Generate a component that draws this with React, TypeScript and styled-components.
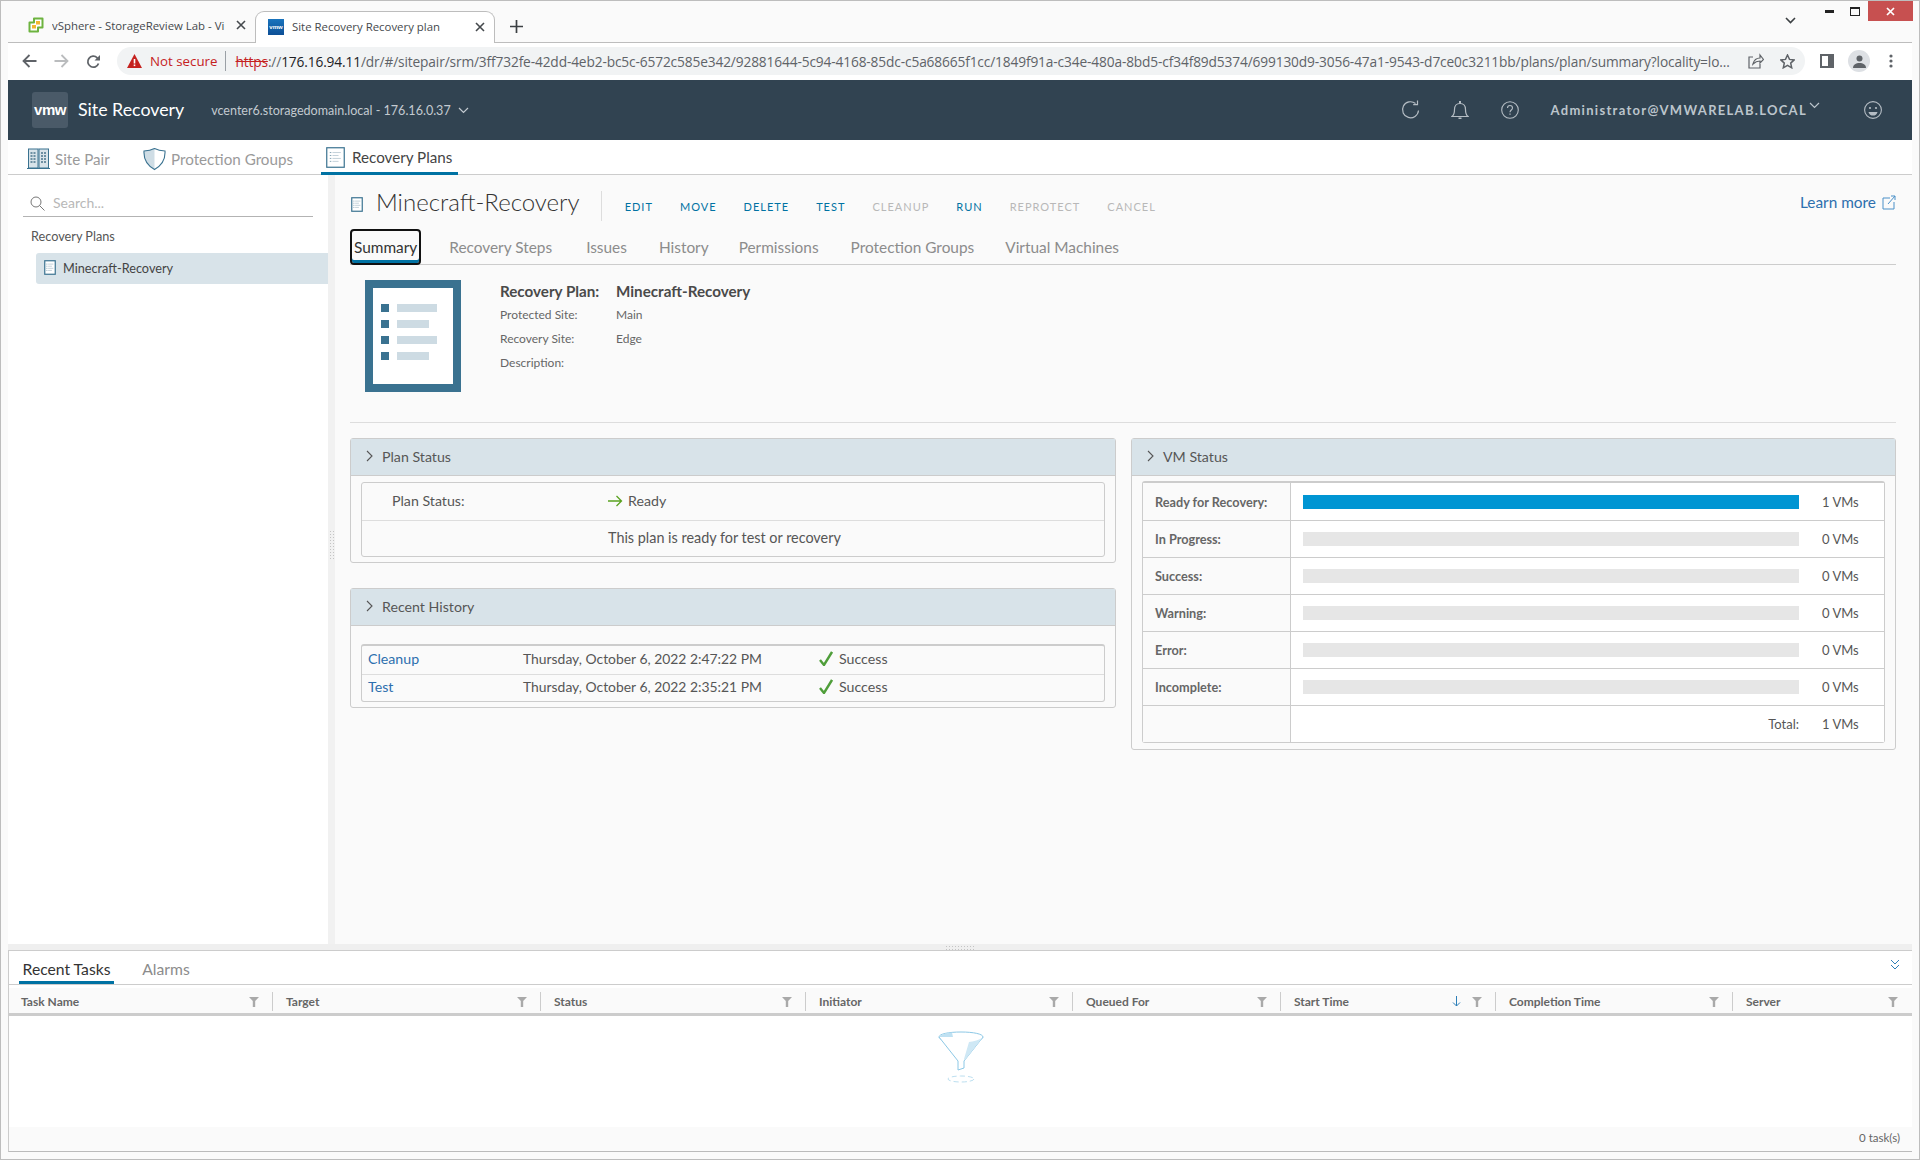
import styled, { createGlobalStyle } from "styled-components";

const GlobalStyle = createGlobalStyle`
  html, body {
    margin: 0;
    padding: 0;
    background: #fafafa;
  }
  * {
    box-sizing: border-box;
  }
`;

const APP_FONT = `Lato, "Liberation Sans", sans-serif`;
const CHROME_FONT = `"Open Sans", "Liberation Sans", sans-serif`;

const Page = styled.div`
  width: 1920px;
  height: 1160px;
  border: 1px solid #bdbdbd;
  background: #fafafa;
  display: flex;
  flex-direction: column;
  overflow: hidden;
  font-family: ${APP_FONT};
  color: #565656;
`;

/* browser chrome */
const TabStrip = styled.div`
  height: 41px;
  flex: none;
  display: flex;
  align-items: flex-end;
  padding-left: 18px;
  font-family: ${CHROME_FONT};
  font-size: 11.4px;
  color: #45494d;
`;
const BrowserTab = styled.div<{ $active?: boolean; $width: number }>`
  position: relative;
  z-index: 2;
  width: ${(p) => p.$width}px;
  height: 32px;
  margin-bottom: ${(p) => (p.$active ? "-1px" : "0")};
  display: flex;
  align-items: center;
  padding: 0 9px 2px ${(p) => (p.$active ? 12 : 9)}px;
  gap: 8px;
  background: ${(p) => (p.$active ? "#fff" : "transparent")};
  border: ${(p) => (p.$active ? "1px solid #bdbdbd" : "none")};
  border-bottom: none;
  border-radius: 9px 9px 0 0;
`;
const BrowserTabTitle = styled.span`
  flex: 1;
  overflow: hidden;
  white-space: nowrap;
`;
const VmwFavicon = styled.span`
  width: 16px;
  height: 16px;
  flex: none;
  background: linear-gradient(#1a74bd, #0d4f96);
  color: #fff;
  font: bold 6px/16px "Liberation Sans", sans-serif;
  text-align: center;
`;
const NewTab = styled.div`
  margin: 0 0 6px 15px;
  height: 20px;
  display: flex;
  align-items: center;
`;
const StripRight = styled.div`
  margin-left: auto;
  height: 100%;
  display: flex;
  align-items: flex-start;
  padding-right: 6px;
`;
const TabListChevron = styled.div`
  margin: 16px 20px 0 0;
  line-height: 0;
`;
const WindowButton = styled.div<{ $close?: boolean }>`
  width: ${(p) => (p.$close ? 45 : 26)}px;
  height: 20px;
  display: flex;
  align-items: center;
  justify-content: center;
  background: ${(p) => (p.$close ? "#c75050" : "transparent")};
`;
const Shell = styled.div`
  flex: 1;
  min-height: 0;
  display: flex;
  flex-direction: column;
  padding: 0 7px 7px 7px;
`;
const Toolbar = styled.div`
  height: 38px;
  flex: none;
  background: #fff;
  border-top: 1px solid #bdbdbd;
  display: flex;
  align-items: flex-start;
  padding: 4px 0 0 14px;
  font-family: ${CHROME_FONT};
`;
const NavButton = styled.div`
  width: 32px;
  height: 28px;
  display: flex;
  align-items: center;
  flex: none;
`;
const Omnibox = styled.div`
  width: 1688px;
  height: 28px;
  margin-left: -1px;
  background: #f1f3f4;
  border-radius: 14px;
  display: flex;
  align-items: center;
  padding: 0 10px;
  font-size: 13.73px;
  white-space: nowrap;
`;
const NotSecure = styled.span`
  color: #c5221f;
  font-size: 13.3px;
  margin-left: 8px;
  padding-right: 8px;
  border-right: 1px solid #9aa0a6;
  line-height: 20px;
`;
const Url = styled.span`
  margin-left: 9px;
  width: 1496px;
  color: #5f6368;
  flex: none;
  letter-spacing: -0.01em;
`;
const UrlScheme = styled.span`
  color: #c5221f;
  text-decoration: line-through;
`;
const UrlHost = styled.span`
  color: #202124;
`;
const OmniActions = styled.div`
  display: flex;
  align-items: center;
  gap: 16px;
  margin-left: 17px;
`;
const ToolbarRight = styled.div`
  display: flex;
  align-items: center;
  height: 28px;
  margin-left: 15px;
  gap: 14px;
`;
const Avatar = styled.div`
  width: 22px;
  height: 22px;
  border-radius: 50%;
  background: #dde0e4;
  display: flex;
  align-items: center;
  justify-content: center;
`;

/* vcenter header */
const Header = styled.header`
  height: 60px;
  flex: none;
  background: #314351;
  display: flex;
  align-items: center;
  padding-left: 24px;
`;
const LogoBox = styled.div`
  width: 36px;
  height: 36px;
  background: #4a5a68;
  border-radius: 3px;
  color: #fff;
  font: bold 15px/36px "Liberation Sans", sans-serif;
  letter-spacing: -0.5px;
  text-align: center;
`;
const Product = styled.div`
  margin: 0 0 3px 10px;
  color: #fff;
  font-size: 17.8px;
`;
const VcenterName = styled.div`
  margin-left: 27px;
  color: #c3cad0;
  font-size: 12.55px;
  display: flex;
  align-items: center;
  gap: 7px;
`;
const HeaderRight = styled.div`
  margin-left: auto;
  display: flex;
  align-items: center;
  padding-right: 30px;
`;
const HeaderIcon = styled.div<{ $gap: number }>`
  line-height: 0;
  margin-left: ${(p) => p.$gap}px;
`;
const UserName = styled.div`
  margin-left: 32px;
  color: #bcc5cc;
  font-size: 13px;
  font-weight: bold;
  letter-spacing: 1.3px;
  display: flex;
  gap: 2px;
`;

/* primary nav */
const PrimaryNav = styled.nav`
  height: 35px;
  flex: none;
  background: #fff;
  border-bottom: 1px solid #ccc;
  display: flex;
`;
const PrimaryItem = styled.div<{ $active?: boolean; $left: number; $width: number }>`
  margin-left: ${(p) => p.$left}px;
  width: ${(p) => p.$width}px;
  height: 35px;
  display: flex;
  align-items: center;
  padding: 2px 0 0 5px;
  gap: ${(p) => (p.$active ? 7 : 5)}px;
  font-size: 15.2px;
  color: ${(p) => (p.$active ? "#444" : "#9a9a9a")};
  border-bottom: ${(p) => (p.$active ? "3px solid #0072a3" : "none")};
  white-space: nowrap;
`;

/* workspace */
const Workspace = styled.div`
  flex: 1;
  min-height: 0;
  display: flex;
`;
const Sidebar = styled.aside`
  width: 320px;
  flex: none;
  background: #fff;
  padding-top: 18px;
`;
const SearchBox = styled.div`
  margin-left: 15px;
  width: 290px;
  height: 24px;
  border-bottom: 1px solid #b3b3b3;
  display: flex;
  align-items: flex-start;
  padding-left: 7px;
  gap: 8px;
  font-size: 14px;
  line-height: 20px;
  color: #b8b8b8;
`;
const SearchGlyph = styled.svg`
  flex: none;
  display: block;
  margin-top: 3px;
`;
const TreeTitle = styled.div`
  margin: 10px 0 0 23px;
  height: 18px;
  font-size: 12.7px;
  line-height: 18px;
`;
const TreeRow = styled.div`
  margin: 8px 0 0 28px;
  height: 31px;
  background: #d8e3e9;
  border-radius: 3px 0 0 3px;
  display: flex;
  align-items: center;
  padding: 0 0 2px 8px;
  gap: 7px;
  font-size: 12.7px;
  color: #444;
`;
const VerticalGrip = styled.div`
  width: 7px;
  flex: none;
  background: #f1f1f1;
  display: flex;
  align-items: center;
  justify-content: center;
  padding-bottom: 30px;
`;
const GripDots = styled.div<{ $wide?: boolean }>`
  width: ${(p) => (p.$wide ? 30 : 5)}px;
  height: ${(p) => (p.$wide ? 5 : 30)}px;
  background-image: radial-gradient(#c4c4c4 1px, transparent 1px);
  background-size: 3px 3px;
`;
const Main = styled.main`
  flex: 1;
  min-width: 0;
  padding: 0 16px 0 15px;
`;
const TitleRow = styled.div`
  height: 54px;
  display: flex;
  align-items: flex-start;
  padding-top: 16px;
`;
const TitleIcon = styled.div`
  line-height: 0;
  margin: 6px 0 0 1px;
`;
const PlanTitle = styled.h1`
  margin: 0 0 0 13px;
  padding-right: 21px;
  height: 30px;
  border-right: 1px solid #ddd;
  font-size: 24px;
  font-weight: 300;
  line-height: 22px;
  color: #333;
`;
const Actions = styled.div`
  margin-left: 23px;
  height: 30px;
  display: flex;
  align-items: center;
  gap: 27px;
`;
const ActionLink = styled.span<{ $disabled?: boolean }>`
  font-size: 11px;
  letter-spacing: 1px;
  padding-top: 1px;
  color: ${(p) => (p.$disabled ? "#b8b8b8" : "#0072a3")};
`;
const LearnMore = styled.div`
  margin-left: auto;
  display: flex;
  align-items: center;
  gap: 6px;
  height: 22px;
  font-size: 15.4px;
  color: #2d6fae;
`;
const TabBar = styled.div`
  height: 36px;
  border-bottom: 1px solid #ccc;
  display: flex;
  font-size: 15.4px;
`;
const TabItem = styled.div<{ $active?: boolean; $left: number }>`
  margin-left: ${(p) => p.$left}px;
  height: 36px;
  display: flex;
  align-items: center;
  white-space: nowrap;
  padding: ${(p) => (p.$active ? "0 2px" : "0")};
  color: ${(p) => (p.$active ? "#333" : "#8c8c8c")};
  border: ${(p) => (p.$active ? "2px solid #111" : "none")};
  border-radius: ${(p) => (p.$active ? "4px" : "0")};
  box-shadow: ${(p) => (p.$active ? "inset 0 -3px 0 #0072a3" : "none")};
`;
const SummaryBlock = styled.section`
  height: 158px;
  border-bottom: 1px solid #ddd;
  padding: 15px 0 0 15px;
  display: flex;
  gap: 39px;
`;
const FactList = styled.div`
  display: grid;
  grid-template-columns: 116px auto;
  grid-auto-rows: 24px;
  align-items: center;
  font-size: 12px;
  color: #666;
  margin-top: -2px;
  align-content: start;
`;
const FactStrong = styled.div`
  font-size: 15.2px;
  font-weight: bold;
  color: #4a4a4a;
  white-space: nowrap;
  padding-top: 2px;
`;
const FactText = styled.div`
  white-space: nowrap;
`;
const Cards = styled.div`
  display: grid;
  grid-template-columns: 766px 765px;
  column-gap: 15px;
  margin-top: 15px;
  align-items: start;
`;
const Column = styled.div`
  display: flex;
  flex-direction: column;
  gap: 25px;
`;
const Card = styled.div<{ $height: number }>`
  height: ${(p) => p.$height}px;
  border: 1px solid #ccc;
  border-radius: 3px;
  background: #fafafa;
  padding: 0 10px;
`;
const CardHeader = styled.div`
  height: 37px;
  margin: 0 -10px;
  background: #d8e3e9;
  border-bottom: 1px solid #ccc;
  display: flex;
  align-items: center;
  padding: 0 0 2px 15px;
  gap: 9px;
  font-size: 14.2px;
  color: #565656;
`;
const InnerTable = styled.div<{ $top: number; $thick?: boolean }>`
  margin-top: ${(p) => p.$top}px;
  border: 1px solid #ccc;
  border-top-width: ${(p) => (p.$thick ? 2 : 1)}px;
  border-radius: 3px;
`;
const StatusRow = styled.div<{ $height: number; $lift?: number }>`
  height: ${(p) => p.$height}px;
  display: flex;
  align-items: center;
  padding-bottom: ${(p) => p.$lift ?? 2}px;
  font-size: 14.2px;
  & + & {
    border-top: 1px solid #ddd;
  }
`;
const StatusLabel = styled.span`
  margin-left: 30px;
  width: 216px;
`;
const StatusValue = styled.span`
  margin-left: 5px;
`;
const StatusMessage = styled.span`
  margin-left: 246px;
  font-size: 14.4px;
`;
const HistoryLink = styled.span`
  width: 155px;
  margin-left: 6px;
  color: #2d6fae;
`;
const HistoryDate = styled.span`
  width: 296px;
  font-size: 13.9px;
  white-space: nowrap;
`;
const HistoryResult = styled.span`
  display: flex;
  align-items: center;
  gap: 6px;
`;
const VmRow = styled.div`
  height: 37px;
  display: grid;
  grid-template-columns: 148px 1fr;
  font-size: 12.7px;
  & + & {
    border-top: 1px solid #ccc;
  }
`;
const VmLabel = styled.div`
  padding-left: 12px;
  display: flex;
  align-items: center;
  font-weight: bold;
  color: #666;
  background: #fafafa;
  border-right: 1px solid #ccc;
`;
const VmCell = styled.div`
  background: #fff;
  display: flex;
  align-items: center;
  padding-left: 12px;
`;
const VmBar = styled.div<{ $filled: boolean }>`
  width: 496px;
  height: 14px;
  background: ${(p) => (p.$filled ? "#0095d3" : "#e6e6e6")};
`;
const VmCount = styled.span`
  margin-left: 23px;
  font-size: 13px;
  white-space: nowrap;
`;
const VmTotal = styled.span`
  width: 496px;
  text-align: right;
  font-size: 13px;
`;

/* bottom tasks panel */
const HorizontalGrip = styled.div`
  height: 7px;
  flex: none;
  background: #efefef;
  border-bottom: 1px solid #ccc;
  display: flex;
  justify-content: center;
  align-items: center;
`;
const TasksPanel = styled.section`
  height: 201px;
  flex: none;
  background: #fff;
  border-left: 1px solid #ccc;
  border-bottom: 1px solid #bbb;
  display: flex;
  flex-direction: column;
`;
const TaskTabs = styled.div`
  height: 34px;
  flex: none;
  border-bottom: 1px solid #ccc;
  display: flex;
  font-size: 15.7px;
`;
const TaskTab = styled.div<{ $active?: boolean; $left: number; $width: number }>`
  margin-left: ${(p) => p.$left}px;
  width: ${(p) => p.$width}px;
  text-align: center;
  white-space: nowrap;
  padding-top: 9px;
  color: ${(p) => (p.$active ? "#333" : "#8c8c8c")};
  border-bottom: ${(p) => (p.$active ? "3px solid #0072a3" : "none")};
`;
const CollapseIcon = styled.div`
  margin: 8px 12px 0 auto;
  line-height: 0;
`;
const ColumnHeaders = styled.div`
  height: 25px;
  flex: none;
  margin-top: 3px;
  background: #fafafa;
  display: grid;
  grid-template-columns: 264px 268px 265px 267px 208px 215px 237px 178px;
  font-size: 12px;
  font-weight: bold;
  color: #666;
`;
const ColumnCell = styled.div`
  margin: 4px 0 2px;
  padding: 0 13px;
  display: flex;
  align-items: center;
  gap: 7px;
  border-right: 1px solid #ccc;
  &:first-child {
    padding-left: 12px;
  }
  &:last-child {
    border-right: none;
  }
`;
const ColumnName = styled.span`
  flex: 1;
  white-space: nowrap;
`;
const EmptyBody = styled.div`
  flex: 1;
  min-height: 0;
  border-top: 3px solid #ccc;
  display: flex;
  justify-content: center;
  padding-top: 14px;
`;
const TasksFooter = styled.div`
  height: 24px;
  flex: none;
  background: #fafafa;
  text-align: right;
  padding: 4px 12px 0 0;
  font-size: 11.5px;
  color: #666;
`;

const InlineIcon = styled.svg`
  flex: none;
  display: block;
`;
const KebabGlyph = styled.svg`
  flex: none;
  display: block;
  margin-left: 5px;
`;
const SortGlyph = styled.svg`
  flex: none;
  display: block;
  margin-right: 4px;
`;

function VsphereFavicon() {
  return (
    <InlineIcon width="16" height="16" viewBox="0 0 16 16">
      <path d="M6 1.5h8.5v9H10v4H1.5v-9H6z" fill="#fff" stroke="#6db33f" strokeWidth="2" strokeLinejoin="round" />
      <rect x="8" y="4" width="4" height="3.5" fill="#f2b632" />
      <rect x="4" y="8" width="4" height="3.5" fill="#f2b632" />
    </InlineIcon>
  );
}

function TabClose() {
  return (
    <InlineIcon width="10" height="10" viewBox="0 0 10 10">
      <path d="M1 1l8 8M9 1l-8 8" stroke="#45494d" strokeWidth="1.6" />
    </InlineIcon>
  );
}

function DocIcon({ size = 12, height = 15 }: { size?: number; height?: number }) {
  const lines = [0.24, 0.38, 0.52, 0.66];
  return (
    <InlineIcon width={size} height={height} viewBox={`0 0 ${size} ${height}`}>
      <rect x="0.75" y="0.75" width={size - 1.5} height={height - 1.5} fill="#fff" stroke="#3a7290" strokeWidth="1.2" />
      {lines.map((l, i) => (
        <g key={i}>
          <rect x={size * 0.2} y={height * l} width={size * 0.08} height="1" fill="#8aa7b7" />
          <rect x={size * 0.34} y={height * l} width={size * (i % 2 ? 0.32 : 0.44)} height="1" fill="#c4d2da" />
        </g>
      ))}
    </InlineIcon>
  );
}

function BuildingsIcon() {
  const windows = [0, 1, 2, 3];
  return (
    <InlineIcon width="23" height="22" viewBox="0 0 23 22">
      <rect x="1.5" y="1" width="9.5" height="19" fill="#d8e3e9" stroke="#3a7290" />
      <rect x="12" y="1" width="9.5" height="19" fill="#d8e3e9" stroke="#3a7290" />
      <path d="M0 20.5h23" stroke="#3a7290" />
      {windows.map((r) =>
        [3.5, 6.5, 14, 17].map((x) => (
          <rect key={`${r}-${x}`} x={x} y={4 + r * 3} width="2" height="2" fill="#6d8fa2" />
        ))
      )}
    </InlineIcon>
  );
}

function ShieldIcon() {
  return (
    <InlineIcon width="23" height="24" viewBox="0 0 23 24">
      <path d="M11.5 1.5C8.5 3 5 3.8 1 4c-.5 8 3.5 14.5 10.5 18.5z" fill="#cfdde5" />
      <path d="M11.5 1.5c3 1.5 6.5 2.3 10.5 2.5.5 8-3.5 14.5-10.5 18.5C4.5 18.5.5 12 1 4c4-.2 7.5-1 10.5-2.5z" fill="none" stroke="#3a7290" strokeWidth="1.1" />
    </InlineIcon>
  );
}

function PlanGlyph() {
  const rows = [40, 32, 40, 32];
  return (
    <InlineIcon width="96" height="112" viewBox="0 0 96 112">
      <rect width="96" height="112" fill="#3a7290" />
      <rect x="8" y="8" width="80" height="96" fill="#fff" />
      {rows.map((w, i) => (
        <g key={i}>
          <rect x="16" y={24 + i * 16} width="8" height="8" fill="#3a7290" />
          <rect x="32" y={24 + i * 16} width={w} height="8" fill="#cddbe3" />
        </g>
      ))}
    </InlineIcon>
  );
}

function Chevron({ dir = "right", color = "#565656" }: { dir?: "right" | "down"; color?: string }) {
  return dir === "right" ? (
    <InlineIcon width="7" height="12" viewBox="0 0 7 12">
      <path d="M1 1l5 5-5 5" fill="none" stroke={color} strokeWidth="1.1" />
    </InlineIcon>
  ) : (
    <InlineIcon width="11" height="7" viewBox="0 0 11 7">
      <path d="M1 1l4.5 4.5L10 1" fill="none" stroke={color} strokeWidth="1.2" />
    </InlineIcon>
  );
}

function Check() {
  return (
    <InlineIcon width="14" height="16" viewBox="0 0 14 16">
      <path d="M1 10l4 5L13 2" fill="none" stroke="#4f9e3a" strokeWidth="2.4" />
    </InlineIcon>
  );
}

function FilterGlyph() {
  return (
    <InlineIcon width="10" height="11" viewBox="0 0 10 11">
      <path d="M0 1h10L6.2 5v6H3.8V5z" fill="#a9a9a9" />
    </InlineIcon>
  );
}

function Funnel() {
  return (
    <InlineIcon width="50" height="56" viewBox="0 0 50 56">
      <path d="M3 7c0-3 9.5-5 22-5s22 2 22 5c0 3-9.5 5-22 5S3 10 3 7z" fill="#fff" stroke="#8cc8e6" />
      <path d="M3 7c1-2 6-3.6 13-4.5l2 9.2C10 11 5 9.5 3 7z" fill="#bfe1f2" />
      <path d="M3 7l19 24v9l6-2V31L47 7" fill="#fff" stroke="#8cc8e6" />
      <path d="M47 7c-3 3-10 4.5-14 5l-5 17 1 1z" fill="#cfe8f5" />
      <ellipse cx="25" cy="49" rx="13" ry="3" fill="none" stroke="#bcdff0" strokeDasharray="5 3" />
    </InlineIcon>
  );
}

function FactRow({ name, value }: { name: string; value: string }) {
  return (
    <>
      <FactText>{name}</FactText>
      <FactText>{value}</FactText>
    </>
  );
}

const facts = [
  ["Protected Site:", "Main"],
  ["Recovery Site:", "Edge"],
  ["Description:", ""],
];
const vmRows = [
  ["Ready for Recovery:", "1 VMs", true],
  ["In Progress:", "0 VMs", false],
  ["Success:", "0 VMs", false],
  ["Warning:", "0 VMs", false],
  ["Error:", "0 VMs", false],
  ["Incomplete:", "0 VMs", false],
] as const;
const taskColumns = [
  "Task Name",
  "Target",
  "Status",
  "Initiator",
  "Queued For",
  "Start Time",
  "Completion Time",
  "Server",
];
const actions: [string, boolean][] = [
  ["EDIT", false],
  ["MOVE", false],
  ["DELETE", false],
  ["TEST", false],
  ["CLEANUP", true],
  ["RUN", false],
  ["REPROTECT", true],
  ["CANCEL", true],
];
const detailTabs: [string, number][] = [
  ["Recovery Steps", 28],
  ["Issues", 34],
  ["History", 32],
  ["Permissions", 30],
  ["Protection Groups", 32],
  ["Virtual Machines", 31],
];

export default function App() {
  return (
    <Page>
      <GlobalStyle />
      <TabStrip>
        <BrowserTab $width={236}>
          <VsphereFavicon />
          <BrowserTabTitle>vSphere - StorageReview Lab - Vi</BrowserTabTitle>
          <TabClose />
        </BrowserTab>
        <BrowserTab $active $width={240}>
          <VmwFavicon>vmw</VmwFavicon>
          <BrowserTabTitle>Site Recovery Recovery plan</BrowserTabTitle>
          <TabClose />
        </BrowserTab>
        <NewTab>
          <InlineIcon width="13" height="13" viewBox="0 0 13 13">
            <path d="M6.5 0v13M0 6.5h13" stroke="#3c4043" strokeWidth="1.7" />
          </InlineIcon>
        </NewTab>
        <StripRight>
          <TabListChevron>
            <InlineIcon width="11" height="7" viewBox="0 0 11 7">
              <path d="M1 1l4.5 4.5L10 1" fill="none" stroke="#3c4043" strokeWidth="1.6" />
            </InlineIcon>
          </TabListChevron>
          <WindowButton>
            <InlineIcon width="9" height="3" viewBox="0 0 9 3">
              <rect y="0" width="9" height="3" fill="#222" />
            </InlineIcon>
          </WindowButton>
          <WindowButton>
            <InlineIcon width="10" height="9" viewBox="0 0 10 9">
              <rect x="0.5" y="1" width="9" height="7.5" fill="none" stroke="#222" />
              <rect width="10" height="2" fill="#222" />
            </InlineIcon>
          </WindowButton>
          <WindowButton $close>
            <InlineIcon width="9" height="9" viewBox="0 0 9 9">
              <path d="M1 1l7 7M8 1l-7 7" stroke="#fff" strokeWidth="1.7" />
            </InlineIcon>
          </WindowButton>
        </StripRight>
      </TabStrip>
      <Shell>
        <Toolbar>
          <NavButton>
            <InlineIcon width="15" height="14" viewBox="0 0 15 14">
              <path d="M14.5 7H2M7.5 1L1.5 7l6 6" fill="none" stroke="#5f6368" strokeWidth="1.8" />
            </InlineIcon>
          </NavButton>
          <NavButton>
            <InlineIcon width="15" height="14" viewBox="0 0 15 14">
              <path d="M0.5 7H13M7.5 1l6 6-6 6" fill="none" stroke="#babcbe" strokeWidth="1.8" />
            </InlineIcon>
          </NavButton>
          <NavButton>
            <InlineIcon width="15" height="15" viewBox="0 0 15 15">
              <path d="M12.5 9.5a5.5 5.5 0 1 1-1.3-5.7l1.8 1.7" fill="none" stroke="#5f6368" strokeWidth="1.8" />
              <path d="M14 1v5.5H8.5z" fill="#5f6368" />
            </InlineIcon>
          </NavButton>
          <Omnibox>
            <InlineIcon width="15" height="14" viewBox="0 0 15 14">
              <path d="M7.5 0L15 14H0z" fill="#c5221f" />
              <rect x="6.7" y="5" width="1.6" height="4.5" fill="#fff" />
              <rect x="6.7" y="10.5" width="1.6" height="1.6" fill="#fff" />
            </InlineIcon>
            <NotSecure>Not secure</NotSecure>
            <Url>
              <UrlScheme>https</UrlScheme>://
              <UrlHost>176.16.94.11</UrlHost>
              /dr/#/sitepair/srm/3ff732fe-42dd-4eb2-bc5c-6572c585e342/92881644-5c94-4168-85dc-c5a68665f1cc/1849f91a-c34e-480a-8bd5-cf34f89d5374/699130d9-3056-47a1-9543-d7ce0c3211bb/plans/plan/summary?locality=lo...
            </Url>
            <OmniActions>
              <InlineIcon width="16" height="16" viewBox="0 0 16 16">
                <path d="M5 4H1v11h11v-4M5 11c1-4 4-6 7-6V2l3.5 4.5L12 10V8c-3 0-5 1-7 3z" fill="none" stroke="#5f6368" strokeWidth="1.2" />
              </InlineIcon>
              <InlineIcon width="15" height="15" viewBox="0 0 15 15">
                <path d="M7.5 1l2 4.4 4.7.5-3.5 3.2 1 4.7-4.200-2.400-4.200 2.400 1-4.700L.8 5.900l4.700-.5z" fill="none" stroke="#5f6368" strokeWidth="1.5" />
              </InlineIcon>
            </OmniActions>
          </Omnibox>
          <ToolbarRight>
            <InlineIcon width="14" height="14" viewBox="0 0 14 14">
              <rect x="1" y="1" width="12" height="12" fill="none" stroke="#5f6368" strokeWidth="2" />
              <rect x="8" y="1" width="5" height="12" fill="#5f6368" />
            </InlineIcon>
            <Avatar>
              <InlineIcon width="13" height="13" viewBox="0 0 13 13">
                <circle cx="6.5" cy="3.5" r="3" fill="#5f6368" />
                <path d="M0 13c0-3.5 3-5 6.5-5s6.5 1.5 6.5 5z" fill="#5f6368" />
              </InlineIcon>
            </Avatar>
            <KebabGlyph width="4" height="14" viewBox="0 0 4 14">
              <circle cx="2" cy="2" r="1.6" fill="#5f6368" />
              <circle cx="2" cy="7" r="1.6" fill="#5f6368" />
              <circle cx="2" cy="12" r="1.6" fill="#5f6368" />
            </KebabGlyph>
          </ToolbarRight>
        </Toolbar>

        <Header>
          <LogoBox>vmw</LogoBox>
          <Product>Site Recovery</Product>
          <VcenterName>
            vcenter6.storagedomain.local - 176.16.0.37
            <Chevron dir="down" color="#c3cad0" />
          </VcenterName>
          <HeaderRight>
            <HeaderIcon $gap={0}>
              <InlineIcon width="19" height="20" viewBox="0 0 19 20">
                <path d="M17.5 10.5a8 8 0 1 1-3-7" fill="none" stroke="#b5bdc4" strokeWidth="1.2" />
                <path d="M16.5.5v4.2h-4.3" fill="none" stroke="#b5bdc4" strokeWidth="1.2" />
              </InlineIcon>
            </HeaderIcon>
            <HeaderIcon $gap={31}>
              <InlineIcon width="18" height="20" viewBox="0 0 18 20">
                <path d="M1 16.5c2-1.5 2.5-4 2.5-7 0-3.5 2-6 5.5-6s5.5 2.5 5.5 6c0 3 .5 5.5 2.5 7z" fill="none" stroke="#b5bdc4" strokeWidth="1.2" />
                <rect x="8" y="1" width="2" height="2.5" fill="#b5bdc4" />
                <rect x="7.5" y="17.5" width="3" height="1.5" fill="#b5bdc4" />
              </InlineIcon>
            </HeaderIcon>
            <HeaderIcon $gap={32}>
              <InlineIcon width="18" height="18" viewBox="0 0 18 18">
                <circle cx="9" cy="9" r="8.3" fill="none" stroke="#b5bdc4" strokeWidth="1.1" />
                <path d="M6.5 7c0-1.6 1-2.5 2.5-2.5S11.5 5.4 11.5 7c0 2-2.5 2-2.5 4.2" fill="none" stroke="#b5bdc4" strokeWidth="1.1" />
                <rect x="8.4" y="12.5" width="1.2" height="1.3" fill="#b5bdc4" />
              </InlineIcon>
            </HeaderIcon>
            <UserName>
              Administrator@VMWARELAB.LOCAL
              <Chevron dir="down" color="#bcc5cc" />
            </UserName>
            <HeaderIcon $gap={44}>
              <InlineIcon width="18" height="20" viewBox="0 0 18 20">
                <circle cx="9" cy="10" r="8.4" fill="none" stroke="#b5bdc4" strokeWidth="1.1" />
                <circle cx="6" cy="8" r="1.1" fill="#b5bdc4" />
                <circle cx="12" cy="8" r="1.1" fill="#b5bdc4" />
                <path d="M4.5 12h9c-.5 2.5-2.3 3.6-4.5 3.6S5 14.5 4.5 12z" fill="#b5bdc4" />
              </InlineIcon>
            </HeaderIcon>
          </HeaderRight>
        </Header>

        <PrimaryNav>
          <PrimaryItem $left={14} $width={116}>
            <BuildingsIcon />
            Site Pair
          </PrimaryItem>
          <PrimaryItem $left={0} $width={183}>
            <ShieldIcon />
            Protection Groups
          </PrimaryItem>
          <PrimaryItem $active $left={0} $width={137}>
            <DocIcon size={19} height={21} />
            Recovery Plans
          </PrimaryItem>
        </PrimaryNav>

        <Workspace>
          <Sidebar>
            <SearchBox>
              <SearchGlyph width="15" height="15" viewBox="0 0 15 15">
                <circle cx="6" cy="6" r="5" fill="none" stroke="#777" />
                <path d="M9.5 9.5L14.5 14.5" stroke="#777" />
              </SearchGlyph>
              Search...
            </SearchBox>
            <TreeTitle>Recovery Plans</TreeTitle>
            <TreeRow>
              <DocIcon />
              Minecraft-Recovery
            </TreeRow>
          </Sidebar>
          <VerticalGrip>
            <GripDots />
          </VerticalGrip>
          <Main>
            <TitleRow>
              <TitleIcon>
                <DocIcon />
              </TitleIcon>
              <PlanTitle>Minecraft-Recovery</PlanTitle>
              <Actions>
                {actions.map(([label, disabled]) => (
                  <ActionLink key={label} $disabled={disabled}>
                    {label}
                  </ActionLink>
                ))}
              </Actions>
              <LearnMore>
                Learn more
                <InlineIcon width="14" height="15" viewBox="0 0 14 15">
                  <path d="M8 3H1v11h11V7M6 9l7-8M9 1h4v4" fill="none" stroke="#4a90c8" strokeWidth="1" />
                </InlineIcon>
              </LearnMore>
            </TitleRow>
            <TabBar>
              <TabItem $active $left={0}>
                Summary
              </TabItem>
              {detailTabs.map(([label, left]) => (
                <TabItem key={label} $left={left}>
                  {label}
                </TabItem>
              ))}
            </TabBar>
            <SummaryBlock>
              <PlanGlyph />
              <FactList>
                <FactStrong>Recovery Plan:</FactStrong>
                <FactStrong>Minecraft-Recovery</FactStrong>
                {facts.map(([name, value]) => (
                  <FactRow key={name} name={name} value={value} />
                ))}
              </FactList>
            </SummaryBlock>
            <Cards>
              <Column>
                <Card $height={125}>
                  <CardHeader>
                    <Chevron />
                    Plan Status
                  </CardHeader>
                  <InnerTable $top={6}>
                    <StatusRow $height={37}>
                      <StatusLabel>Plan Status:</StatusLabel>
                      <InlineIcon width="15" height="12" viewBox="0 0 15 12">
                        <path d="M0 6h13M8.5 1l5 5-5 5" fill="none" stroke="#5aa220" strokeWidth="1.3" />
                      </InlineIcon>
                      <StatusValue>Ready</StatusValue>
                    </StatusRow>
                    <StatusRow $height={36}>
                      <StatusMessage>This plan is ready for test or recovery</StatusMessage>
                    </StatusRow>
                  </InnerTable>
                </Card>
                <Card $height={120}>
                  <CardHeader>
                    <Chevron />
                    Recent History
                  </CardHeader>
                  <InnerTable $top={18} $thick>
                    <StatusRow $height={28} $lift={4}>
                      <HistoryLink>Cleanup</HistoryLink>
                      <HistoryDate>Thursday, October 6, 2022 2:47:22 PM</HistoryDate>
                      <HistoryResult>
                        <Check />
                        Success
                      </HistoryResult>
                    </StatusRow>
                    <StatusRow $height={27} $lift={4}>
                      <HistoryLink>Test</HistoryLink>
                      <HistoryDate>Thursday, October 6, 2022 2:35:21 PM</HistoryDate>
                      <HistoryResult>
                        <Check />
                        Success
                      </HistoryResult>
                    </StatusRow>
                  </InnerTable>
                </Card>
              </Column>
              <Card $height={312}>
                <CardHeader>
                  <Chevron />
                  VM Status
                </CardHeader>
                <InnerTable $top={5} $thick>
                  {vmRows.map(([label, count, filled]) => (
                    <VmRow key={label}>
                      <VmLabel>{label}</VmLabel>
                      <VmCell>
                        <VmBar $filled={filled} />
                        <VmCount>{count}</VmCount>
                      </VmCell>
                    </VmRow>
                  ))}
                  <VmRow>
                    <VmLabel />
                    <VmCell>
                      <VmTotal>Total:</VmTotal>
                      <VmCount>1 VMs</VmCount>
                    </VmCell>
                  </VmRow>
                </InnerTable>
              </Card>
            </Cards>
          </Main>
        </Workspace>

        <HorizontalGrip>
          <GripDots $wide />
        </HorizontalGrip>
        <TasksPanel>
          <TaskTabs>
            <TaskTab $active $left={10} $width={95}>
              Recent Tasks
            </TaskTab>
            <TaskTab $left={27} $width={50}>
              Alarms
            </TaskTab>
            <CollapseIcon>
              <InlineIcon width="10" height="11" viewBox="0 0 10 11">
                <path d="M1 1l4 4 4-4M1 6l4 4 4-4" fill="none" stroke="#2d7fb8" />
              </InlineIcon>
            </CollapseIcon>
          </TaskTabs>
          <ColumnHeaders>
            {taskColumns.map((name) => (
              <ColumnCell key={name}>
                <ColumnName>{name}</ColumnName>
                {name === "Start Time" && (
                  <SortGlyph width="9" height="11" viewBox="0 0 9 11">
                    <path d="M4.5 0v10M1 6.5l3.5 3.5L8 6.5" fill="none" stroke="#2d7fb8" />
                  </SortGlyph>
                )}
                <FilterGlyph />
              </ColumnCell>
            ))}
          </ColumnHeaders>
          <EmptyBody>
            <Funnel />
          </EmptyBody>
          <TasksFooter>0 task(s)</TasksFooter>
        </TasksPanel>
      </Shell>
    </Page>
  );
}
